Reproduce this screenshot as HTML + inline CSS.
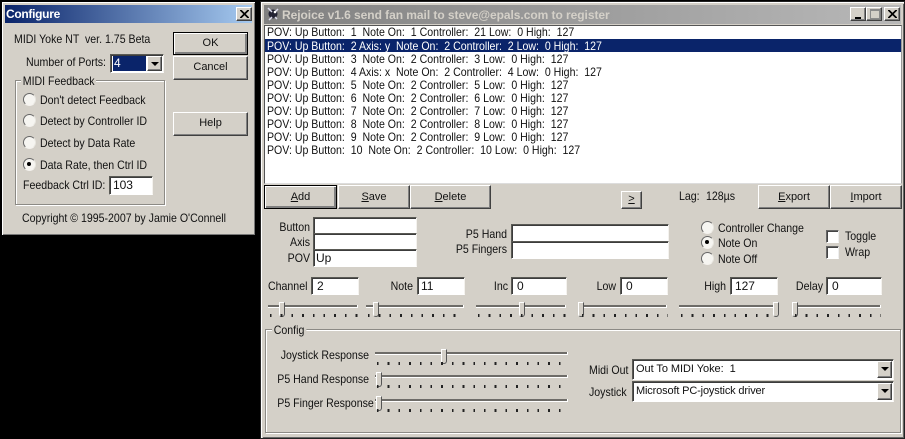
<!DOCTYPE html>
<html><head><meta charset="utf-8"><style>
html,body{margin:0;padding:0;width:905px;height:439px;overflow:hidden;background:#000}
div,span{position:absolute;box-sizing:border-box}
u{position:static}
.t{white-space:pre;font:12px/14px "Liberation Sans",sans-serif;color:#111;transform:scaleX(.882);transform-origin:0 0}
.r{text-align:right;transform-origin:100% 0}
.n{transform:none}
.f{background:#fff;border:1px solid;border-color:#5a5a55 #f4f2ee #fff #5a5a55;box-shadow:inset 1px 1px 0 #3c3c3c;white-space:pre;font:11px/16px "Liberation Sans",sans-serif;letter-spacing:-.05px;color:#111;padding-left:2px}
.b{background:#d4d0c8;border:1px solid;border-color:#fff #404040 #404040 #fff;box-shadow:inset -1px -1px 0 #808080;font:11px/20px "Liberation Sans",sans-serif;color:#111;text-align:center}
.k{border:1px solid #000;box-shadow:inset 1px 1px 0 #fff,inset -2px -2px 0 #808080}
.o{width:13px;height:13px;border-radius:50%;background:#f6f5f1;border:1.5px solid;border-color:#666 #e8e6e0 #f4f2ee #666}
.o.on:after{content:"";position:absolute;left:3px;top:3px;width:4px;height:4px;border-radius:50%;background:#000}
.x{width:13px;height:13px;background:#fff;border:1px solid;border-color:#666 #eee #fff #666;box-shadow:inset 1px 1px 0 #444}
.g{border:1px solid #8c8a85;box-shadow:1px 1px 0 #fff,inset 1px 1px 0 #fff}
.tr{height:3px;background:#6e6c68;border-bottom:1px solid #fff;border-right:1px solid #fff}
.th{width:6px;height:15px;background:#d4d0c8;border:1px solid;border-color:#fff #555 #555 #fff;border-radius:0 0 3px 3px}
.tk{height:3px;background:repeating-linear-gradient(90deg,#222 0,#222 1.7px,transparent 1.7px,transparent 10.7px)}
.a{width:0;height:0;border:4px solid transparent;border-top:4px solid #000;border-bottom:0}
</style></head><body>

<!-- Configure window -->
<div style="left:0;top:0;width:257px;height:237px;background:#d4d0c8;border:2px solid #000;box-shadow:inset 1px 1px 0 #fff,inset -1px -1px 0 #777"></div>
<div style="left:5px;top:5px;width:247px;height:18px;background:linear-gradient(90deg,#0a246a,#a6caf0)"></div>
<div class="t n" style="left:6px;top:7px;font-weight:bold;color:#fff;letter-spacing:-.3px">Configure</div>
<div class="b" style="left:236px;top:7px;width:16px;height:14px"><svg style="position:absolute;left:3px;top:2px" width="9" height="8"><path d="M0 0L8 8M1 0L9 8M8 0L0 8M9 0L1 8" stroke="#000" fill="none"/></svg></div>

<div class="t" style="left:14px;top:32px">MIDI Yoke NT  ver. 1.75 Beta</div>
<div class="t" style="left:26px;top:55px">Number of Ports:</div>
<div class="f" style="left:110px;top:54px;width:54px;height:19px"></div>
<div style="left:113px;top:56px;width:33px;height:15px;background:#0a246a;color:#fff;font:12px/15px 'Liberation Sans',sans-serif;padding-left:1px">4</div>
<div class="b" style="left:147px;top:56px;width:15px;height:15px"><div class="a" style="left:3px;top:5px"></div></div>

<div class="g" style="left:15px;top:80px;width:150px;height:125px"></div>
<div class="t" style="left:21px;top:74px;background:#d4d0c8;padding:0 2px">MIDI Feedback</div>
<div class="o" style="left:23px;top:93px"></div><div class="t" style="left:40px;top:93px">Don't detect Feedback</div>
<div class="o" style="left:23px;top:114px"></div><div class="t" style="left:40px;top:114px">Detect by Controller ID</div>
<div class="o" style="left:23px;top:136px"></div><div class="t" style="left:40px;top:136px">Detect by Data Rate</div>
<div class="o on" style="left:23px;top:158px"></div><div class="t" style="left:40px;top:158px">Data Rate, then Ctrl ID</div>
<div class="t" style="left:23px;top:178px">Feedback Ctrl ID:</div>
<div class="f" style="left:109px;top:176px;width:44px;height:19px;padding-left:3px;font-size:12px">103</div>
<div class="t" style="left:22px;top:211px">Copyright © 1995-2007 by Jamie O'Connell</div>

<div class="b k" style="left:173px;top:32px;width:75px;height:23px">OK</div>
<div class="b" style="left:173px;top:56px;width:75px;height:24px">Cancel</div>
<div class="b" style="left:173px;top:112px;width:75px;height:24px">Help</div>

<!-- Main window -->
<div style="left:260px;top:1px;width:645px;height:438px;background:#d4d0c8;border:1px solid #222;box-shadow:inset 1px 1px 0 #fff,inset 2px 2px 0 #d4d0c8,inset -1px -1px 0 #666"></div>
<div style="left:264px;top:5px;width:637px;height:19px;background:linear-gradient(90deg,#808080,#b8b8b8)"></div>
<svg style="position:absolute;left:266px;top:6px" width="14" height="16"><circle cx="7" cy="8" r="4.5" fill="#223"/><path d="M2 2L6 6M12 3L9 6M3 14L6 11M11 13L9 11" stroke="#dde" stroke-width="1.5"/><circle cx="9" cy="6" r="1.3" fill="#fff"/></svg>
<div class="t n" style="left:282px;top:8px;font-weight:bold;color:#d4d0c8;letter-spacing:-.05px">Rejoice v1.6 send fan mail to steve@epals.com to register</div>
<div class="b" style="left:850px;top:7px;width:16px;height:14px"><div style="left:4px;top:9px;width:6px;height:2px;background:#000"></div></div>
<div class="b" style="left:866px;top:7px;width:16px;height:14px"><div style="left:3px;top:1px;width:10px;height:10px;border:1px solid #8a8a8a;border-top-width:2px"></div></div>
<div class="b" style="left:884px;top:7px;width:16px;height:14px"><svg style="position:absolute;left:3px;top:2px" width="9" height="8"><path d="M0 0L8 8M1 0L9 8M8 0L0 8M9 0L1 8" stroke="#000" fill="none"/></svg></div>

<div style="left:264px;top:25px;width:638px;height:159px;background:#fff;border:1px solid;border-color:#555 #999 #ddd #555"></div>
<div style="left:265px;top:39px;width:636px;height:13px;background:#0a246a"></div>
<div class="t" style="left:267px;top:25px">POV: Up Button:  1  Note On:  1 Controller:  21 Low:  0 High:  127</div>
<div class="t" style="left:267px;top:39px;color:#fff">POV: Up Button:  2 Axis: y  Note On:  2 Controller:  2 Low:  0 High:  127</div>
<div class="t" style="left:267px;top:52px">POV: Up Button:  3  Note On:  2 Controller:  3 Low:  0 High:  127</div>
<div class="t" style="left:267px;top:65px">POV: Up Button:  4 Axis: x  Note On:  2 Controller:  4 Low:  0 High:  127</div>
<div class="t" style="left:267px;top:78px">POV: Up Button:  5  Note On:  2 Controller:  5 Low:  0 High:  127</div>
<div class="t" style="left:267px;top:91px">POV: Up Button:  6  Note On:  2 Controller:  6 Low:  0 High:  127</div>
<div class="t" style="left:267px;top:104px">POV: Up Button:  7  Note On:  2 Controller:  7 Low:  0 High:  127</div>
<div class="t" style="left:267px;top:117px">POV: Up Button:  8  Note On:  2 Controller:  8 Low:  0 High:  127</div>
<div class="t" style="left:267px;top:130px">POV: Up Button:  9  Note On:  2 Controller:  9 Low:  0 High:  127</div>
<div class="t" style="left:267px;top:143px">POV: Up Button:  10  Note On:  2 Controller:  10 Low:  0 High:  127</div>

<div class="b k" style="left:264px;top:185px;width:73px;height:24px;line-height:22px"><u>A</u>dd</div>
<div class="b" style="left:338px;top:185px;width:72px;height:24px;line-height:22px"><u>S</u>ave</div>
<div class="b" style="left:410px;top:185px;width:81px;height:24px;line-height:22px"><u>D</u>elete</div>
<div class="b" style="left:621px;top:191px;width:21px;height:18px;line-height:15px"><u>&gt;</u></div>
<div class="t" style="left:679px;top:189px">Lag:</div>
<div class="t" style="left:706px;top:189px">128µs</div>
<div class="b" style="left:758px;top:185px;width:72px;height:24px;line-height:22px"><u>E</u>xport</div>
<div class="b" style="left:830px;top:185px;width:72px;height:24px;line-height:22px"><u>I</u>mport</div>

<div class="t r" style="left:260px;top:220px;width:50px">Button</div>
<div class="t r" style="left:260px;top:235px;width:50px">Axis</div>
<div class="t r" style="left:260px;top:251px;width:50px">POV</div>
<div class="f" style="left:313px;top:217px;width:104px;height:17px"></div>
<div class="f" style="left:313px;top:233px;width:104px;height:17px"></div>
<div class="f" style="left:313px;top:249px;width:104px;height:18px;font-size:12px">Up</div>

<div class="t r" style="left:440px;top:227px;width:67px">P5 Hand</div>
<div class="t r" style="left:440px;top:242px;width:67px">P5 Fingers</div>
<div class="f" style="left:511px;top:224px;width:158px;height:18px"></div>
<div class="f" style="left:511px;top:241px;width:158px;height:18px"></div>

<div class="o" style="left:701px;top:221px"></div><div class="t" style="left:718px;top:221px">Controller Change</div>
<div class="o on" style="left:701px;top:236px"></div><div class="t" style="left:718px;top:236px">Note On</div>
<div class="o" style="left:701px;top:252px"></div><div class="t" style="left:718px;top:252px">Note Off</div>
<div class="x" style="left:826px;top:230px"></div><div class="t" style="left:845px;top:229px">Toggle</div>
<div class="x" style="left:826px;top:246px"></div><div class="t" style="left:845px;top:245px">Wrap</div>

<div class="t" style="left:268px;top:279px">Channel</div>
<div class="f" style="left:311px;top:277px;width:48px;height:18px;padding-left:5px;font-size:12px">2</div>
<div class="t r" style="left:380px;top:279px;width:33px">Note</div>
<div class="f" style="left:417px;top:277px;width:48px;height:18px;padding-left:3px;font-size:12px">11</div>
<div class="t r" style="left:475px;top:279px;width:33px">Inc</div>
<div class="f" style="left:511px;top:277px;width:56px;height:18px;padding-left:5px;font-size:12px">0</div>
<div class="t r" style="left:583px;top:279px;width:33px">Low</div>
<div class="f" style="left:620px;top:277px;width:48px;height:18px;padding-left:5px;font-size:12px">0</div>
<div class="t r" style="left:693px;top:279px;width:33px">High</div>
<div class="f" style="left:730px;top:277px;width:48px;height:18px;padding-left:4px;font-size:12px">127</div>
<div class="t r" style="left:783px;top:279px;width:40px">Delay</div>
<div class="f" style="left:826px;top:277px;width:56px;height:18px;padding-left:5px;font-size:12px">0</div>

<div class="tr" style="left:268px;top:305px;width:90px"></div><div class="th" style="left:279px;top:302px"></div><div class="tk" style="left:270px;top:314px;width:88px"></div>
<div class="tr" style="left:366px;top:305px;width:98px"></div><div class="th" style="left:373px;top:302px"></div><div class="tk" style="left:368px;top:314px;width:96px"></div>
<div class="tr" style="left:476px;top:305px;width:90px"></div><div class="th" style="left:519px;top:302px"></div><div class="tk" style="left:478px;top:314px;width:88px"></div>
<div class="tr" style="left:580px;top:305px;width:87px"></div><div class="th" style="left:578px;top:302px"></div><div class="tk" style="left:582px;top:314px;width:86px"></div>
<div class="tr" style="left:679px;top:305px;width:98px"></div><div class="th" style="left:773px;top:302px"></div><div class="tk" style="left:681px;top:314px;width:96px"></div>
<div class="tr" style="left:793px;top:305px;width:88px"></div><div class="th" style="left:792px;top:302px"></div><div class="tk" style="left:795px;top:314px;width:86px"></div>

<div class="g" style="left:265px;top:329px;width:636px;height:104px"></div>
<div class="t" style="left:272px;top:323px;background:#d4d0c8;padding:0 2px">Config</div>

<div class="t r" style="left:265px;top:348px;width:104px">Joystick Response</div>
<div class="t r" style="left:265px;top:372px;width:104px">P5 Hand Response</div>
<div class="t r" style="left:265px;top:396px;width:104px">P5 Finger Response</div>
<div class="tr" style="left:375px;top:352px;width:193px"></div><div class="th" style="left:441px;top:349px"></div><div class="tk" style="left:377px;top:362px;width:192px"></div>
<div class="tr" style="left:375px;top:375px;width:193px"></div><div class="th" style="left:376px;top:372px"></div><div class="tk" style="left:377px;top:385px;width:192px"></div>
<div class="tr" style="left:375px;top:399px;width:193px"></div><div class="th" style="left:376px;top:396px"></div><div class="tk" style="left:377px;top:409px;width:192px"></div>

<div class="t" style="left:589px;top:363px">Midi Out</div>
<div class="t" style="left:589px;top:385px">Joystick</div>
<div class="f" style="left:632px;top:359px;width:262px;height:21px;line-height:18px;padding-left:3px">Out To MIDI Yoke:  1</div>
<div class="f" style="left:632px;top:381px;width:262px;height:21px;line-height:19px;padding-left:3px;letter-spacing:-.15px">Microsoft PC-joystick driver</div>
<div class="b" style="left:877px;top:361px;width:15px;height:17px"><div class="a" style="left:3px;top:5px"></div></div>
<div class="b" style="left:877px;top:383px;width:15px;height:17px"><div class="a" style="left:3px;top:5px"></div></div>

</body></html>
